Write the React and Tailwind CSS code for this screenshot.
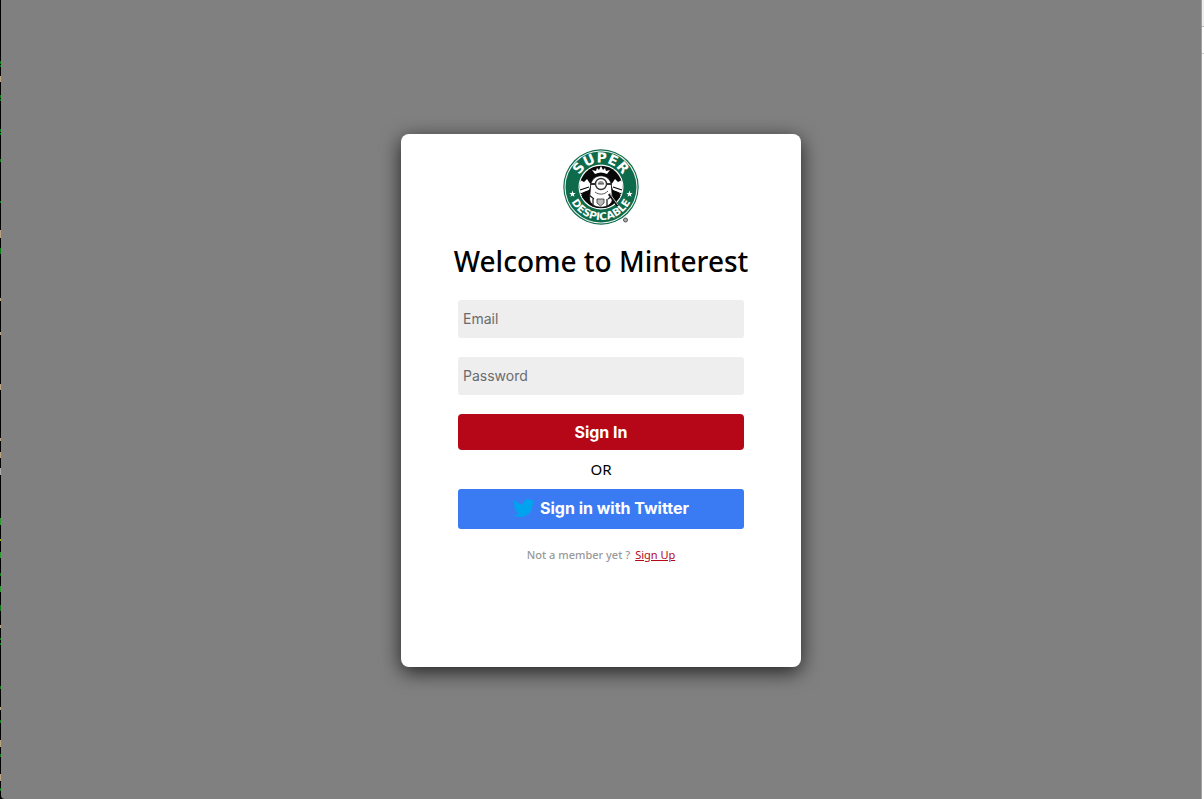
const STAR = "M0 -3.4L0.8 -1.1L3.2 -1.1L1.3 0.4L2 2.8L0 1.4L-2 2.8L-1.3 0.4L-3.2 -1.1L-0.8 -1.1Z";

function Logo() {
  return (
    <svg viewBox="0 0 76 76" className="size-19 overflow-visible" role="img" aria-label="Super Despicable">
      <defs>
        <path id="arc-top" d="M13.500 38A24.500 24.500 0 0 1 62.500 38" />
        <path id="arc-bottom" d="M5 38A33 33 0 0 0 71 38" />
        <clipPath id="badge"><circle cx="38" cy="38" r="21.500" /></clipPath>
      </defs>
      <circle cx="38" cy="38" r="37.700" fill="#0d6b4b" />
      <circle cx="38" cy="38" r="36" fill="none" stroke="#e8f1ed" strokeWidth="1.100" />
      <circle cx="38" cy="38" r="22.500" fill="#fff" />
      <circle cx="38" cy="38" r="21.300" fill="#080808" />
      <g clipPath="url(#badge)">
        <path d="M17 31l4 2 3-3 4 6-2 5-5 2-5 5z M59 31l-4 2-3-3-4 6 2 5 5 2 5 5z" fill="#fff" />
        <path d="M17 41l9-3M17 45l9-3M18 49l9-4M59 41l-9-3M59 45l-9-3M58 49l-9-4" stroke="#080808" strokeWidth="1.300" />
        <path d="M27.500 38c0-15 21-15 21 0l1 12c-1 11-22 11-23 0z" fill="#fff" stroke="#080808" strokeWidth=".8" />
        <path d="M32 25l-3-4 4 1 1-3 2 2 2-4 2 4 2-2 1 3 4-1-3 4c-4-2-8-2-12 0z" fill="#fff" />
        <path d="M27 35h22" stroke="#333" strokeWidth="2" />
        <circle cx="38" cy="35" r="5.500" fill="#fff" stroke="#333" strokeWidth="1.400" />
        <path d="M35 35a3 3 0 0 1 6 0z" fill="#999" />
        <path d="M35 35h6" stroke="#333" strokeWidth=".9" />
        <path d="M32 43c4 3 9 3 13-1" fill="none" stroke="#555" strokeWidth="1" />
        <path d="M26 46l5 4 M50 46l-5 4M30 50v9M44 50v9" fill="none" stroke="#222" strokeWidth="1.300" />
        <path d="M34 50h7v4l-3.500 3-3.500-3z" fill="#bbb" stroke="#333" strokeWidth=".8" />
      </g>
      <path d="M46 45l9 12" stroke="#111" strokeWidth="2.600" />
      <path d="M47 45l8 11" stroke="#eee" strokeWidth=".8" />
      <g fill="#fff" fontFamily="DejaVu Sans, sans-serif" fontWeight="700" textAnchor="middle">
        <text fontSize="14"><textPath href="#arc-top" startOffset="50%">SUPER</textPath></text>
        <text fontSize="10.500"><textPath href="#arc-bottom" startOffset="50%">DESPICABLE</textPath></text>
      </g>
      <path d={STAR} transform="translate(9.500 45)" fill="#fff" />
      <path d={STAR} transform="translate(66.500 45)" fill="#fff" />
      <circle cx="62.500" cy="71" r="2" fill="#aaa" stroke="#555" strokeWidth="1" />
    </svg>
  );
}

function TwitterBird() {
  return (
    <svg viewBox="0 0 24 24" className="size-[22px] shrink-0" aria-hidden="true">
      <path fill="#00a3ee" d="M23.954 4.569a10 10 0 0 1-2.825.775 4.958 4.958 0 0 0 2.163-2.723c-.951.555-2.005.959-3.127 1.184a4.920 4.920 0 0 0-8.384 4.482C7.691 8.094 4.066 6.130 1.640 3.161a4.822 4.822 0 0 0-.666 2.475c0 1.710.87 3.213 2.188 4.096a4.904 4.904 0 0 1-2.228-.616v.061a4.923 4.923 0 0 0 3.946 4.827 4.996 4.996 0 0 1-2.212.085 4.937 4.937 0 0 0 4.604 3.417 9.868 9.868 0 0 1-6.102 2.105c-.39 0-.779-.023-1.170-.067a13.995 13.995 0 0 0 7.557 2.209c9.054 0 13.999-7.496 13.999-13.986 0-.209 0-.42-.015-.63a9.936 9.936 0 0 0 2.460-2.548z" />
    </svg>
  );
}

const G = "#0b7d18";
const T = "#b9a27c";
const SPECKS = [
  [61, 3, G], [65, 2, G], [76, 6, T], [95, 3, G], [99, 2, G], [129, 3, G], [133, 2, G], [159, 3, G], [201, 2, G],
  [230, 8, T], [248, 6, G], [298, 3, T], [332, 3, T], [384, 6, T], [438, 3, T], [452, 6, T], [468, 7, "#aaaaaa"],
  [518, 7, "#2f9a2f"], [539, 2, "#a0b02a"], [552, 6, "#2f9a2f"], [573, 3, G], [586, 6, "#2f9a2f"], [605, 6, G],
  [625, 3, T], [638, 2, G], [643, 2, G], [686, 3, G], [707, 3, T], [720, 3, G], [740, 7, T], [754, 3, G],
  [774, 7, T], [788, 3, G],
];

function EdgeSpecks() {
  return (
    <svg className="w-px" aria-hidden="true">
      {SPECKS.map(([y, h, fill]) => (
        <rect key={y} y={y} width="1" height={h} fill={fill} />
      ))}
    </svg>
  );
}

const field =
  "h-[38px] w-full rounded-[3px] bg-[#eeeeee] px-[5px] pb-[2px] font-[Inter,sans-serif] text-[14px] text-black placeholder:text-[#6b6b6b]";

export default function App() {
  return (
    <div className="flex min-h-screen bg-black font-['Noto_Sans',sans-serif]">
      <EdgeSpecks />
      <main className="flex flex-1 items-center justify-center rounded-bl-[4px] bg-[#808080] pt-[18px] pb-4">
        <section className="flex min-h-[533px] w-[400px] flex-col items-center rounded-[8px] bg-white px-[57px] pt-[15px] pb-8 shadow-[0_5px_20px_rgba(0,0,0,0.75)]">
          <Logo />
          <h1 className="mt-4 text-[28px] leading-[40px] font-medium whitespace-nowrap text-black">Welcome to Minterest</h1>
          <form className="mt-[19px] flex w-full flex-col gap-[19px]" onSubmit={(e) => e.preventDefault()}>
            <input className={field} type="email" placeholder="Email" aria-label="Email" />
            <input className={field} type="password" placeholder="Password" aria-label="Password" />
            <button className="h-9 w-full rounded-[4px] bg-[#b50718] pb-px font-[Inter,sans-serif] text-[16px] font-bold text-white" type="submit">
              Sign In
            </button>
          </form>
          <p className="my-2 text-[15px] leading-[23px] text-black">OR</p>
          <button className="flex h-10 w-full items-center justify-center gap-[5px] rounded-[3px] bg-[#3a7bf3] pb-[2px] font-[Inter,sans-serif] text-[16px] font-bold text-white" type="button">
            <TwitterBird />
            Sign in with Twitter
          </button>
          <p className="mt-4 flex gap-[5px] text-[11px] leading-5 font-medium text-[#999999]">
            Not a member yet ? <a href="#signup" className="font-normal text-[#b50718] underline">Sign Up</a>
          </p>
        </section>
      </main>
      <div className="w-px bg-[#a0a0a0]" />
      <div className="flex w-[2px] flex-col bg-white">
        <div className="h-[27px] border-b border-[#bbbbbb] bg-[#eeeeee]" />
        <div className="h-[27px] border-b border-[#cccccc]" />
      </div>
    </div>
  );
}
